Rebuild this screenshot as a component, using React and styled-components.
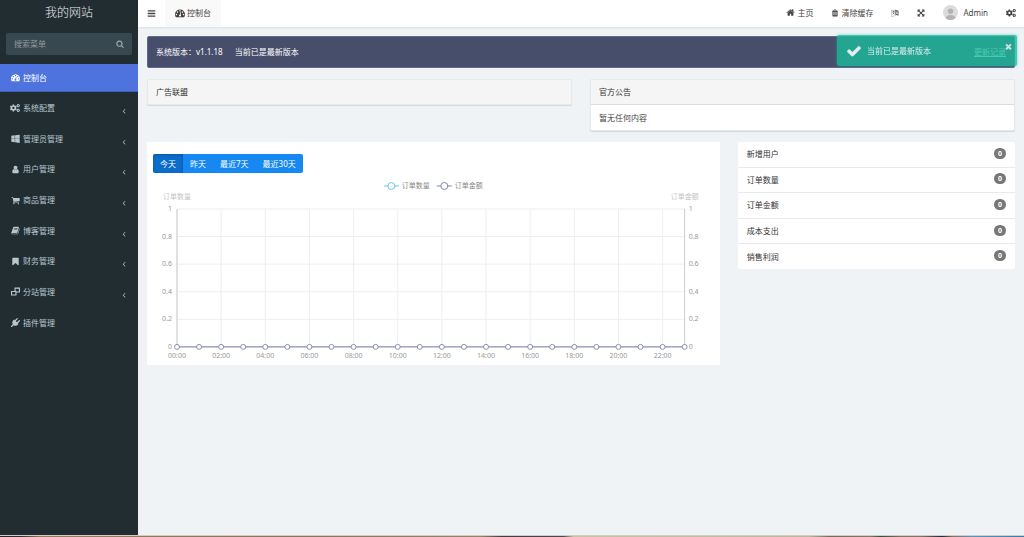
import React, { useState } from "react";
import styled, { createGlobalStyle } from "styled-components";
import { FaCogs } from "react-icons/fa";

const GlobalStyle = createGlobalStyle`
  * {
    box-sizing: border-box;
  }

  body {
    margin: 0;
    background: #eff3f6;
    color: #444;
    font-family: "Noto Sans", "Noto Sans CJK SC", sans-serif;
    font-size: 8px;
    line-height: 12px;
  }

  button, input {
    font: inherit;
  }
`;

const Page = styled.div`
  display: flex;
  flex-direction: column;
  min-height: 100vh;
`;

const Shell = styled.div`
  display: flex;
  flex: 1;
`;

const DesktopStrip = styled.div`
  height: 2px;
  border-top: 1px solid #cfcdc8;
  background: linear-gradient(
    90deg,
    #2b2028 0%, #3a2a2c 2%, #9b7a52 4%, #8d7358 30%, #9a8263 47%,
    #4a3a40 49%, #54454a 55%, #cfc29c 56%, #bdb698 79%,
    #7a6a55 81%, #8a7560 85%, #3c4a3a 86%, #8a7060 88%,
    #8a7060 90%, #22283a 92%, #8a7060 93%, #5c94b8 95%, #3a7aa8 100%
  );
`;

const Sidebar = styled.aside`
  flex: none;
  width: 138px;
  background: #222d32;
`;

const Brand = styled.h1`
  margin: 0;
  padding: 4px 0;
  color: #e8ecee;
  font-size: 12px;
  font-weight: 300;
  line-height: 17px;
  text-align: center;
`;

const SearchForm = styled.form`
  display: flex;
  margin: 8px 6px 9px;
  height: 22px;
  border-radius: 2px;
  background: #374850;
`;

const SearchInput = styled.input`
  flex: 1;
  min-width: 0;
  padding: 0 8px;
  border: 0;
  outline: 0;
  background: transparent;
  color: #b8c7ce;

  &::placeholder {
    color: #93999c;
    opacity: 1;
  }
`;

const IconButton = styled.button`
  display: flex;
  align-items: center;
  padding: 0 ${(props) => props.$pad || 8}px;
  border: 0;
  background: transparent;
  color: ${(props) => props.$color || "#444"};
  cursor: pointer;
`;

const Menu = styled.ul`
  display: flex;
  flex-direction: column;
  justify-content: space-between;
  min-height: 273px;
  margin: 0;
  padding: 0;
  list-style: none;
`;

const MenuLink = styled.a`
  display: flex;
  align-items: center;
  height: 28px;
  padding: 0 10px;
  color: ${(props) => (props.$active ? "#fff" : "#b8c7ce")};
  background: ${(props) => (props.$active ? "#4e73df" : "transparent")};
  border-bottom: 1px solid ${(props) => (props.$active ? "#3f5fc0" : "transparent")};
  text-decoration: none;
`;

const MenuIcon = styled.span`
  display: flex;
  justify-content: center;
  width: 10px;
  margin-right: 3px;
`;

const Chevron = styled.span`
  display: flex;
  margin-left: auto;
  padding-top: 6px;
`;

const Main = styled.div`
  flex: 1;
  min-width: 0;
`;

const Header = styled.header`
  display: flex;
  height: 27px;
  padding-right: 8px;
  background: #fff;
  box-shadow: 0 1px 2px rgba(0, 0, 0, 0.08);
`;

const Tab = styled.a`
  display: flex;
  align-items: center;
  gap: 2px;
  padding: 0 10px 2px;
  background: #f9f9f9;
  color: #444;
  text-decoration: none;
`;

const HeaderNav = styled.nav`
  display: flex;
  align-items: center;
  gap: 18px;
  margin-left: auto;
  padding-bottom: 2px;
`;

const NavLink = styled.a`
  display: flex;
  align-items: center;
  gap: ${(props) => props.$gap || 2}px;
  color: #444;
  text-decoration: none;
`;

const Content = styled.main`
  padding-top: 9px;
`;

const Banner = styled.section`
  display: flex;
  align-items: center;
  gap: 12px;
  height: 32px;
  margin: 0 9px 11px;
  padding: 0 8px;
  border: 1px solid #62698a;
  border-radius: 2px;
  background: #474e6b;
  color: #fff;
`;

const BannerLink = styled.a`
  margin-left: auto;
  color: #fff;
`;

const Row = styled.div`
  display: flex;
  align-items: flex-start;
  margin-bottom: 11px;
`;

const Col = styled.div`
  flex: 0 0 ${(props) => (props.$span / 12) * 100}%;
  padding: 0 9px;
`;

const Panel = styled.section`
  border: 1px solid #e6e8ea;
  border-radius: 2px;
  background: #fff;
  box-shadow: 0 1px 1px rgba(0, 0, 0, 0.12);
`;

const PanelTitle = styled.h2`
  margin: 0;
  padding: 6px 8px;
  background: #f5f5f5;
  color: #333;
  font-size: 8px;
  font-weight: 400;
  line-height: 12px;
`;

const PanelBody = styled.div`
  padding: 6px 8px;
  border-top: 1px solid #ddd;
  line-height: 13px;
`;

const ChartCard = styled.section`
  background: #fff;
`;

const RangeGroup = styled.div`
  display: flex;
  padding: 12px 6px 2px;
`;

const RangeButton = styled.button`
  height: 19px;
  padding: 0 7px;
  border: 0;
  background: ${(props) => (props.$active ? "#0b6cc9" : "#1688f1")};
  box-shadow: ${(props) => (props.$active ? "inset 0 1px 3px rgba(0, 0, 0, 0.2)" : "none")};
  color: #fff;
  cursor: pointer;

  &:first-child {
    border-radius: 2px 0 0 2px;
  }

  &:last-child {
    border-radius: 0 2px 2px 0;
  }
`;

const ChartSvg = styled.svg`
  display: block;
  width: 100%;
  font-size: 7px;
`;

const StatList = styled.ul`
  display: flex;
  flex-direction: column;
  min-height: 127px;
  margin: 0;
  padding: 0;
  border-radius: 2px;
  background: #fff;
  list-style: none;
`;

const StatItem = styled.li`
  display: flex;
  flex: 1;
  align-items: center;
  justify-content: space-between;
  padding: 0 9px;
  color: #333;

  & + & {
    border-top: 1px solid #e8eaec;
  }
`;

const Badge = styled.span`
  min-width: 12px;
  margin-bottom: 2px;
  padding: 0 4px;
  border-radius: 6px;
  background: #777;
  color: #fff;
  font-size: 7px;
  font-weight: 700;
  line-height: 11px;
  text-align: center;
`;

const Toast = styled.div`
  position: fixed;
  top: 35px;
  right: 7px;
  display: flex;
  align-items: center;
  gap: 5px;
  width: 180px;
  height: 31px;
  padding: 0 9px;
  border-radius: 2px;
  background: rgba(26, 188, 156, 0.8);
  box-shadow: 0 0 3px rgba(26, 188, 156, 0.6);
  color: #dfeeee;
  pointer-events: none;
`;

const ToastClose = styled.button`
  position: absolute;
  top: 7px;
  right: 4px;
  display: flex;
  padding: 0;
  border: 0;
  background: transparent;
  color: #d5dfe0;
  cursor: pointer;
  pointer-events: auto;
`;

const PATHS = {
  home: "M1472 992v480q0 26-19 45t-45 19h-384v-384h-256v384h-384q-26 0-45-19t-19-45v-480q0-1 .5-3t.5-3l575-474 575 474q1 2 1 6zm223-69l-62 74q-8 9-21 11h-3q-13 0-21-7l-692-577-692 577q-12 8-24 7-13-2-21-11l-62-74q-8-10-7-23.5t11-21.5l719-599q32-26 76-26t76 26l244 204v-195q0-14 9-23t23-9h192q14 0 23 9t9 23v408l219 182q10 8 11 21.5t-7 23.5z",
  bars: "M1664 1344v128q0 26-19 45t-45 19h-1408q-26 0-45-19t-19-45v-128q0-26 19-45t45-19h1408q26 0 45 19t19 45zm0-512v128q0 26-19 45t-45 19h-1408q-26 0-45-19t-19-45v-128q0-26 19-45t45-19h1408q26 0 45 19t19 45zm0-512v128q0 26-19 45t-45 19h-1408q-26 0-45-19t-19-45v-128q0-26 19-45t45-19h1408q26 0 45 19t19 45z",
  search: "M1216 832q0-185-131.500-316.500t-316.500-131.500-316.500 131.500-131.500 316.500 131.500 316.500 316.500 131.500 316.500-131.500 131.500-316.500zm512 832q0 52-38 90t-90 38q-54 0-90-38l-343-342q-179 124-399 124-143 0-273.500-55.500t-225-150-150-225-55.500-273.500 55.500-273.500 150-225 225-150 273.500-55.500 273.500 55.500 225 150 150 225 55.500 273.500q0 220-124 399l343 343q37 37 37 90z",
  dashboard: "M384 1152q0-53-37.500-90.500t-90.500-37.500-90.500 37.500-37.500 90.500 37.500 90.500 90.500 37.500 90.500-37.500 37.500-90.500zm192-448q0-53-37.500-90.500t-90.500-37.500-90.500 37.500-37.500 90.500 37.500 90.500 90.500 37.500 90.500-37.500 37.500-90.500zm428 481l101-382q6-26-7.500-48.500t-38.500-29.500-48 6.500-30 39.500l-101 382q-60 5-107 43.500t-63 98.500q-20 77 20 146t117 89 146-20 89-117q16-60-6-117t-72-91zm660-33q0-53-37.500-90.500t-90.500-37.500-90.500 37.500-37.500 90.500 37.500 90.500 90.500 37.500 90.500-37.500 37.500-90.500zm-640-640q0-53-37.500-90.500t-90.500-37.500-90.500 37.500-37.500 90.500 37.500 90.500 90.500 37.500 90.500-37.500 37.500-90.500zm448 192q0-53-37.500-90.500t-90.500-37.500-90.500 37.500-37.500 90.500 37.500 90.500 90.500 37.500 90.500-37.500 37.500-90.500zm320 448q0 261-141 483-19 29-54 29h-1402q-35 0-54-29-141-221-141-483 0-182 71-348t191-286 286-191 348-71 348 71 286 191 191 286 71 348z",
  trash: "M704 1376v-704q0-14-9-23t-23-9h-64q-14 0-23 9t-9 23v704q0 14 9 23t23 9h64q14 0 23-9t9-23zm256 0v-704q0-14-9-23t-23-9h-64q-14 0-23 9t-9 23v704q0 14 9 23t23 9h64q14 0 23-9t9-23zm256 0v-704q0-14-9-23t-23-9h-64q-14 0-23 9t-9 23v704q0 14 9 23t23 9h64q14 0 23-9t9-23zm-544-992h448l-48-117q-7-9-17-11h-317q-10 2-17 11zm928 32v64q0 14-9 23t-23 9h-96v948q0 83-47 143.500t-113 60.500h-832q-66 0-113-58.500t-47-141.500v-952h-96q-14 0-23-9t-9-23v-64q0-14 9-23t23-9h309l70-167q15-37 54-63t79-26h320q40 0 79 26t54 63l70 167h309q14 0 23 9t9 23z",
  expand: "M1411 541l-355 355 355 355 144-144q29-31 70-14 39 17 39 59v448q0 26-19 45t-45 19h-448q-42 0-59-40-17-39 14-69l144-144-355-355-355 355 144 144q31 30 14 69-17 40-59 40h-448q-26 0-45-19t-19-45v-448q0-42 40-59 39-17 69 14l144 144 355-355-355-355-144 144q-19 19-45 19-12 0-24-5-40-17-40-59v-448q0-26 19-45t45-19h448q42 0 59 40 17 39-14 69l-144 144 355 355 355-355-144-144q-31-30-14-69 17-40 59-40h448q26 0 45 19t19 45v448q0 42-39 59-13 5-25 5-26 0-45-19z",
  check: "M1671 566q0 40-28 68l-724 724-136 136q-28 28-68 28t-68-28l-136-136-362-362q-28-28-28-68t28-68l136-136q28-28 68-28t68 28l294 295 656-657q28-28 68-28t68 28l136 136q28 28 28 68z",
  times: "M1490 1322q0 40-28 68l-136 136q-28 28-68 28t-68-28l-294-294-294 294q-28 28-68 28t-68-28l-136-136q-28-28-28-68t28-68l294-294-294-294q-28-28-28-68t28-68l136-136q28-28 68-28t68 28l294 294 294-294q28-28 68-28t68 28l136 136q28 28 28 68t-28 68l-294 294 294 294q28 28 28 68z",
  angle: "M1203 544q0 13-10 23l-393 393 393 393q10 10 10 23t-10 23l-50 50q-10 10-23 10t-23-10l-466-466q-10-10-10-23t10-23l466-466q10-10 23-10t23 10l50 50q10 10 10 23z",
  windows: "M746 1006v651l-682-94v-557h682zm0-743v659h-682v-565zm982 743v786l-907-125v-661h907zm0-878v794h-907v-669z",
  user: "M1536 1399q0 109-62.500 187t-150.500 78h-854q-88 0-150.500-78t-62.500-187q0-85 8.500-160.500t31.500-152 58.500-131 94-89 134.500-34.500q131 128 313 128t313-128q76 0 134.500 34.500t94 89 58.500 131 31.500 152 8.500 160.500zm-256-887q0 159-112.500 271.500t-271.500 112.500-271.500-112.500-112.500-271.500 112.500-271.500 271.500-112.500 271.500 112.500 112.500 271.500z",
  cart: "M704 1536q0 52-38 90t-90 38-90-38-38-90 38-90 90-38 90 38 38 90zm896 0q0 52-38 90t-90 38-90-38-38-90 38-90 90-38 90 38 38 90zm128-1088v512q0 24-16.500 42.500t-40.500 21.500l-1044 122q13 60 13 70 0 16-24 64h920q26 0 45 19t19 45-19 45-45 19h-1024q-26 0-45-19t-19-45q0-11 8-31.500t16-36 21.500-40 15.500-29.500l-177-823h-204q-26 0-45-19t-19-45 19-45 45-19h256q16 0 28.500 6.500t19.500 15.500 13 24.500 8 26 5.500 29.500 4.500 26h1201q26 0 45 19t19 45z",
  book: "M1703 478q40 57 18 129l-275 906q-19 64-76.500 107.500t-122.500 43.500h-923q-77 0-148.500-53.500t-99.500-131.500q-24-67-2-127 0-4 3-27t4-37q1-8-3-21.500t-3-19.500q2-11 8-21t16.500-23.500 16.500-23.500q23-38 45-91.500t30-91.500q3-10 .5-30t-.5-28q3-11 17-28t17-23q21-36 42-92t25-90q1-9-2.500-32t.5-28q4-13 22-30.500t22-22.500q19-26 42.500-84.500t27.500-96.500q1-8-3-25.500t-2-26.500q2-8 9-18t18-23 17-21q8-12 16.500-30.500t15-35 16-36 19.500-32 26.500-23.500 36-11.500 47.500 5.500l-1 3q38-9 51-9h761q74 0 114 56t18 130l-274 906q-36 119-71.500 153.500t-128.500 34.500h-869q-27 0-38 15-11 16-1 43 24 70 144 70h923q29 0 56-15.500t35-41.500l300-987q7-22 5-57 38 15 59 43zm-1064 2q-4 13 2 22.500t20 9.500h608q13 0 25.500-9.500t16.500-22.500l21-64q4-13-2-22.500t-20-9.500h-608q-13 0-25.500 9.500t-16.500 22.500zm-83 256q-4 13 2 22.500t20 9.500h608q13 0 25.500-9.500t16.500-22.500l21-64q4-13-2-22.500t-20-9.500h-608q-13 0-25.500 9.500t-16.500 22.500z",
  bookmark: "M1420 128q23 0 44 9 33 13 52.500 41t19.500 62v1289q0 34-19.500 62t-52.500 41q-19 8-44 8-48 0-83-32l-441-424-441 424q-36 33-83 33-23 0-44-9-33-13-52.500-41t-19.500-62v-1289q0-34 19.500-62t52.500-41q21-9 44-9h1048z",
  clone: "M700 100h1092v1000h-700v592h-1092v-900h700zM920 340v452h172v88h480v-540zM220 1012v460h652v-460z",
  plug: "M1755 453q37 38 37 90.500t-37 90.500l-401 400 150 150-160 160q-163 163-389.500 186.500t-411.500-100.500l-362 362h-181v-181l362-362q-124-185-100.500-411.500t186.500-389.500l160-160 150 150 400-401q38-37 91-37t90 37 37 90.500-37 90.500l-400 401 234 234 401-400q38-37 91-37t90 37z",
};

function Icon({ name, size = 9 }) {
  if (name === "cogs") return <FaCogs size={size + 1} />;
  return (
    <svg width={size} height={size} viewBox="0 0 1792 1792" fill="currentColor" fillRule="evenodd" aria-hidden="true">
      <path d={PATHS[name]} />
    </svg>
  );
}

function LanguageIcon() {
  return (
    <svg width="8" height="8" viewBox="0 0 18 18" fill="none" stroke="currentColor" aria-hidden="true">
      <path d="M1 2l9 2v11l-9 2z" strokeWidth="1" opacity="0.6" />
      <path d="M3 6h5M5.500 4v2M4 12q3-2 3-6M4 8l4 4" strokeWidth="1.300" />
      <path d="M8 1l9 3v11l-7-2V4z" fill="currentColor" stroke="none" opacity="0.85" />
      <path d="M12 11l1.500-5 1.500 6M12.500 9.500h2" stroke="#fff" strokeWidth="1.200" />
    </svg>
  );
}

function Avatar() {
  return (
    <svg width="15" height="15" viewBox="0 0 30 30" aria-hidden="true">
      <clipPath id="avatar"><circle cx="15" cy="15" r="15" /></clipPath>
      <g clipPath="url(#avatar)">
        <rect width="30" height="30" fill="#dcdcdc" />
        <circle cx="15" cy="12.500" r="5.500" fill="#b3b3b3" />
        <ellipse cx="15" cy="27" rx="10" ry="7" fill="#b3b3b3" />
      </g>
    </svg>
  );
}

const menu = [
  { icon: "dashboard", label: "控制台", active: true },
  { icon: "cogs", label: "系统配置", children: true },
  { icon: "windows", label: "管理员管理", children: true },
  { icon: "user", label: "用户管理", children: true },
  { icon: "cart", label: "商品管理", children: true },
  { icon: "book", label: "博客管理", children: true },
  { icon: "bookmark", label: "财务管理", children: true },
  { icon: "clone", label: "分站管理", children: true },
  { icon: "plug", label: "插件管理" },
];

const ranges = ["今天", "昨天", "最近7天", "最近30天"];
const stats = ["新增用户", "订单数量", "订单金额", "成本支出", "销售利润"];

const LEFT = 30;
const RIGHT = 538;
const TOP = 34;
const BOTTOM = 172;
const hours = Array.from({ length: 24 }, (_, i) => i);
const ticks = [0, 0.2, 0.4, 0.6, 0.8, 1];
const hourX = (h) => LEFT + ((RIGHT - LEFT) * h) / 23;
const tickY = (t) => BOTTOM - (BOTTOM - TOP) * t;

function LegendItem({ x, color, label }) {
  return (
    <g>
      <path d={`M${x} 11h15`} stroke={color} />
      <circle cx={x + 7.5} cy="11" r="3.500" fill="#fff" stroke={color} />
      <text x={x + 18} y="13" fill="#888">{label}</text>
    </g>
  );
}

function OrderChart() {
  return (
    <ChartSvg viewBox="0 0 573 190" role="img" aria-label="订单数量 订单金额">
      <LegendItem x={237} color="#6cc3ea" label="订单数量" />
      <LegendItem x={290} color="#7d83ab" label="订单金额" />
      <text x={LEFT} y="24" fill="#c4c4c4" textAnchor="middle">订单数量</text>
      <text x={RIGHT} y="24" fill="#c4c4c4" textAnchor="middle">订单金额</text>

      {ticks.map((t) => (
        <g key={t} fill="#999">
          <path d={`M${LEFT} ${tickY(t)}H${RIGHT}`} stroke="#eee" />
          <text x={LEFT - 5} y={tickY(t) + 2} textAnchor="end">{t}</text>
          <text x={RIGHT + 4} y={tickY(t) + 2}>{t}</text>
        </g>
      ))}
      {hours.filter((h) => h % 2 === 0).map((h) => (
        <g key={h}>
          <path d={`M${hourX(h)} ${TOP}V${BOTTOM}`} stroke="#eee" />
          <text x={hourX(h)} y="183" fill="#999" textAnchor="middle">
            {`${String(h).padStart(2, "0")}:00`}
          </text>
        </g>
      ))}

      <path d={`M${LEFT} ${TOP}V${BOTTOM}M${RIGHT} ${TOP}V${BOTTOM}`} stroke="#ccc" />
      <path d={`M${LEFT} ${BOTTOM}H${RIGHT}`} stroke="#757ba6" />
      {hours.map((h) => (
        <circle key={h} cx={hourX(h)} cy={BOTTOM} r="2.500" fill="#fff" stroke="#7d86ab" strokeWidth="0.900" />
      ))}
    </ChartSvg>
  );
}

function App() {
  const [range, setRange] = useState("今天");
  const [showToast, setShowToast] = useState(true);

  return (
    <Page>
      <GlobalStyle />
      <Shell>
        <Sidebar>
          <Brand>我的网站</Brand>
          <SearchForm onSubmit={(e) => e.preventDefault()}>
            <SearchInput type="text" placeholder="搜索菜单" aria-label="搜索菜单" />
            <IconButton type="submit" $color="#a3acb0" aria-label="搜索">
              <Icon name="search" size={8} />
            </IconButton>
          </SearchForm>
          <Menu>
            {menu.map((item) => (
              <li key={item.label}>
                <MenuLink href="#" $active={item.active}>
                  <MenuIcon><Icon name={item.icon} /></MenuIcon>
                  {item.label}
                  {item.children && <Chevron><Icon name="angle" size={8} /></Chevron>}
                </MenuLink>
              </li>
            ))}
          </Menu>
        </Sidebar>

        <Main>
          <Header>
            <IconButton type="button" $pad={9} aria-label="菜单">
              <Icon name="bars" />
            </IconButton>
            <Tab href="#"><Icon name="dashboard" size={10} />控制台</Tab>
            <HeaderNav>
              <NavLink href="#"><Icon name="home" />主页</NavLink>
              <NavLink href="#"><Icon name="trash" size={8} />清除缓存</NavLink>
              <NavLink href="#" aria-label="语言"><LanguageIcon /></NavLink>
              <NavLink href="#" aria-label="全屏"><Icon name="expand" size={8} /></NavLink>
              <NavLink href="#" $gap={5}><Avatar />Admin</NavLink>
              <NavLink href="#" aria-label="设置"><Icon name="cogs" /></NavLink>
            </HeaderNav>
          </Header>

          <Content>
            <Banner>
              <span>系统版本：v1.1.18</span>
              <span>当前已是最新版本</span>
              <BannerLink href="#">更新记录</BannerLink>
            </Banner>

            <Row>
              <Col $span={6}>
                <Panel>
                  <PanelTitle>广告联盟</PanelTitle>
                </Panel>
              </Col>
              <Col $span={6}>
                <Panel>
                  <PanelTitle>官方公告</PanelTitle>
                  <PanelBody>暂无任何内容</PanelBody>
                </Panel>
              </Col>
            </Row>

            <Row>
              <Col $span={8}>
                <ChartCard>
                  <RangeGroup>
                    {ranges.map((r) => (
                      <RangeButton key={r} type="button" $active={r === range} onClick={() => setRange(r)}>
                        {r}
                      </RangeButton>
                    ))}
                  </RangeGroup>
                  <OrderChart />
                </ChartCard>
              </Col>
              <Col $span={4}>
                <StatList>
                  {stats.map((s) => (
                    <StatItem key={s}>
                      {s}
                      <Badge>0</Badge>
                    </StatItem>
                  ))}
                </StatList>
              </Col>
            </Row>
          </Content>
        </Main>
      </Shell>
      <DesktopStrip />

      {showToast && (
        <Toast role="status">
          <Icon name="check" size={16} />
          当前已是最新版本
          <ToastClose type="button" aria-label="关闭" onClick={() => setShowToast(false)}>
            <Icon name="times" size={9} />
          </ToastClose>
        </Toast>
      )}
    </Page>
  );
}

export default App;
